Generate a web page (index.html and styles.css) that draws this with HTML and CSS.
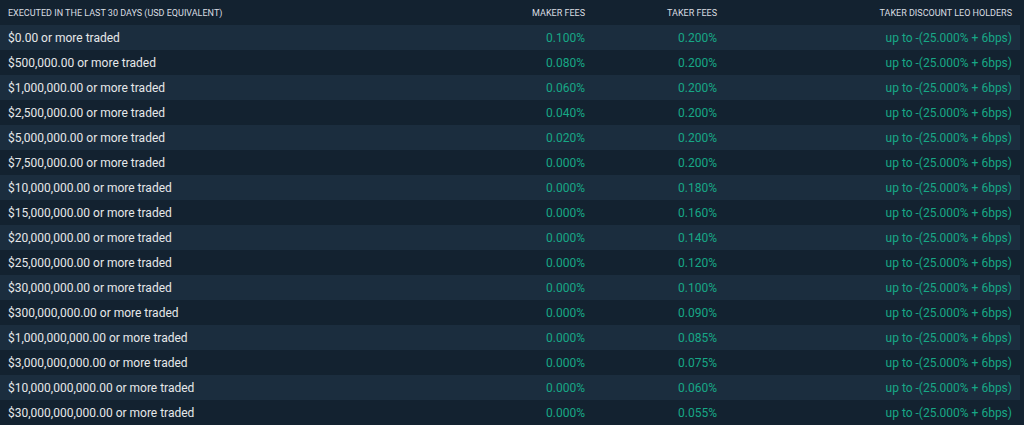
FILE: index.html
```html
<!DOCTYPE html>
<html>
<head>
<meta charset="utf-8">
<link rel="stylesheet" href="styles.css">
</head>
<body>
<div class="page">
<table class="fees">
<thead>
<tr><th class="c1">Executed in the last 30 days (USD equivalent)</th><th class="c2">Maker fees</th><th class="c3">Taker fees</th><th class="c4">Taker discount LEO holders</th></tr>
</thead>
<tbody>
<tr><td class="c1">$0.00 or more traded</td><td class="c2">0.100%</td><td class="c3">0.200%</td><td class="c4">up to -(25.000% + 6bps)</td></tr>
<tr><td class="c1">$500,000.00 or more traded</td><td class="c2">0.080%</td><td class="c3">0.200%</td><td class="c4">up to -(25.000% + 6bps)</td></tr>
<tr><td class="c1">$1,000,000.00 or more traded</td><td class="c2">0.060%</td><td class="c3">0.200%</td><td class="c4">up to -(25.000% + 6bps)</td></tr>
<tr><td class="c1">$2,500,000.00 or more traded</td><td class="c2">0.040%</td><td class="c3">0.200%</td><td class="c4">up to -(25.000% + 6bps)</td></tr>
<tr><td class="c1">$5,000,000.00 or more traded</td><td class="c2">0.020%</td><td class="c3">0.200%</td><td class="c4">up to -(25.000% + 6bps)</td></tr>
<tr><td class="c1">$7,500,000.00 or more traded</td><td class="c2">0.000%</td><td class="c3">0.200%</td><td class="c4">up to -(25.000% + 6bps)</td></tr>
<tr><td class="c1">$10,000,000.00 or more traded</td><td class="c2">0.000%</td><td class="c3">0.180%</td><td class="c4">up to -(25.000% + 6bps)</td></tr>
<tr><td class="c1">$15,000,000.00 or more traded</td><td class="c2">0.000%</td><td class="c3">0.160%</td><td class="c4">up to -(25.000% + 6bps)</td></tr>
<tr><td class="c1">$20,000,000.00 or more traded</td><td class="c2">0.000%</td><td class="c3">0.140%</td><td class="c4">up to -(25.000% + 6bps)</td></tr>
<tr><td class="c1">$25,000,000.00 or more traded</td><td class="c2">0.000%</td><td class="c3">0.120%</td><td class="c4">up to -(25.000% + 6bps)</td></tr>
<tr><td class="c1">$30,000,000.00 or more traded</td><td class="c2">0.000%</td><td class="c3">0.100%</td><td class="c4">up to -(25.000% + 6bps)</td></tr>
<tr><td class="c1">$300,000,000.00 or more traded</td><td class="c2">0.000%</td><td class="c3">0.090%</td><td class="c4">up to -(25.000% + 6bps)</td></tr>
<tr><td class="c1">$1,000,000,000.00 or more traded</td><td class="c2">0.000%</td><td class="c3">0.085%</td><td class="c4">up to -(25.000% + 6bps)</td></tr>
<tr><td class="c1">$3,000,000,000.00 or more traded</td><td class="c2">0.000%</td><td class="c3">0.075%</td><td class="c4">up to -(25.000% + 6bps)</td></tr>
<tr><td class="c1">$10,000,000,000.00 or more traded</td><td class="c2">0.000%</td><td class="c3">0.060%</td><td class="c4">up to -(25.000% + 6bps)</td></tr>
<tr><td class="c1">$30,000,000,000.00 or more traded</td><td class="c2">0.000%</td><td class="c3">0.055%</td><td class="c4">up to -(25.000% + 6bps)</td></tr>
</tbody>
</table>
</div>
</body>
</html>
```
FILE: styles.css
```css
html, body {
  margin: 0;
  padding: 0;
  background: #132230;
}
.page {
  width: 1020px;
  font-family: Roboto, "Liberation Sans", sans-serif;
}
.fees {
  width: 100%;
  border-collapse: collapse;
  table-layout: fixed;
}
.fees th,
.fees td {
  box-sizing: border-box;
  height: 25px;
  padding: 0 8px;
  vertical-align: middle;
}
.fees th {
  font-size: 9px;
  font-weight: 400;
  text-transform: uppercase;
  color: #d9dde2;
  background: #132230;
}
.fees td {
  font-size: 12px;
  color: #17a886;
}
.fees tbody tr:nth-child(odd) td {
  background: #1b2d3e;
}
.fees tbody tr:nth-child(even) td {
  background: #132230;
}
.fees .c1 {
  width: 420px;
  text-align: left;
}
.fees td.c1 {
  color: #e6e8ea;
}
.fees .c2 {
  width: 173px;
  text-align: right;
}
.fees .c3 {
  width: 132px;
  text-align: right;
}
.fees .c4 {
  text-align: right;
}
```
